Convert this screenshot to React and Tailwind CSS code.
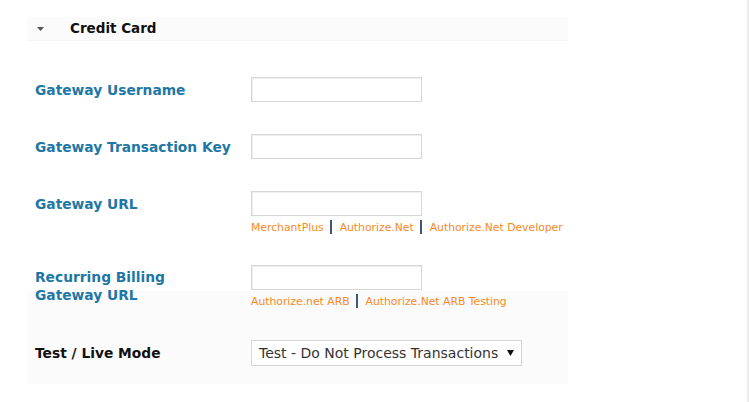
const labelCls = "text-[13.8px] leading-[18px] font-bold text-[#1e77a5]";
const inputCls = "block w-[171px] h-[25px] border border-[#d6d6d6] shadow-[inset_1px_1px_0_#efefef] bg-white";

const Sep = () => (
  <span className="inline-block align-[-3px] ml-[6px] mr-[8px] w-[2px] h-[14px] bg-[#3d5878]" />
);

const Links = ({ items }) => (
  <div className="mt-[4px] h-[14px] text-[10.8px] leading-[14px] text-[#f7891f] whitespace-nowrap">
    {items.map((item, i) => (
      <span key={item}>
        {i > 0 && <Sep />}
        <a className="cursor-pointer">{item}</a>
      </span>
    ))}
  </div>
);

const App = () => {
  return (
    <div
      className="min-h-[402px] w-[749px] bg-white border-r-2 border-[#ececec]"
      style={{ fontFamily: '"DejaVu Sans", Verdana, sans-serif' }}
    >
      <div className="ml-[27px] w-[541px] pt-[17px]">
        {/* Section header */}
        <div className="h-[24px] flex items-center bg-[#fbfbfb] border-b border-[#f4f4f4]">
          <svg width="7" height="4" viewBox="0 0 7 4" className="ml-[10px]">
            <path d="M0 0 L7 0 L3.5 4 Z" fill="#555" />
          </svg>
          <span className="ml-[26px] text-[13.5px] font-bold text-[#111]">Credit Card</span>
        </div>

        <div className="px-[8px]">
          {/* Gateway Username */}
          <div className="mt-[36px] grid grid-cols-[216px_1fr]">
            <div className={`${labelCls} pt-[4px]`}>Gateway Username</div>
            <input className={inputCls} />
          </div>

          {/* Transaction Key */}
          <div className="mt-[32px] grid grid-cols-[216px_1fr]">
            <div className={`${labelCls} pt-[4px]`}>Gateway Transaction Key</div>
            <input className={inputCls} />
          </div>

          {/* Gateway URL */}
          <div className="mt-[32px] grid grid-cols-[216px_1fr]">
            <div className={`${labelCls} pt-[4px]`}>Gateway URL</div>
            <div>
              <input className={inputCls} />
              <Links items={["MerchantPlus", "Authorize.Net", "Authorize.Net Developer"]} />
            </div>
          </div>
        </div>

        {/* Recurring + test mode, grey band behind lower part */}
        <div className="mt-[31px] px-[8px] pb-[18px] bg-[linear-gradient(to_bottom,#ffffff_26px,#fbfbfb_26px)]">
          <div className="grid grid-cols-[216px_1fr]">
            <div className={`${labelCls} pt-[3px]`}>
              Recurring Billing
              <br />
              Gateway URL
            </div>
            <div>
              <input className={inputCls} />
              <Links items={["Authorize.net ARB", "Authorize.Net ARB Testing"]} />
            </div>
          </div>

          <div className="mt-[32px] grid grid-cols-[216px_1fr]">
            <div className="text-[13.8px] leading-[18px] font-bold text-[#111] pt-[4px]">Test / Live Mode</div>
            <div className="w-[271px] h-[26px] border border-[#d6d6d6] bg-white flex items-center justify-between pl-[7px] pr-[7px]">
              <span className="text-[14px] text-[#333]">Test - Do Not Process Transactions</span>
              <svg width="7" height="6" viewBox="0 0 7 6">
                <path d="M0 0 L7 0 L3.5 6 Z" fill="#111" />
              </svg>
            </div>
          </div>
        </div>
      </div>
    </div>
  );
};

export default App;
